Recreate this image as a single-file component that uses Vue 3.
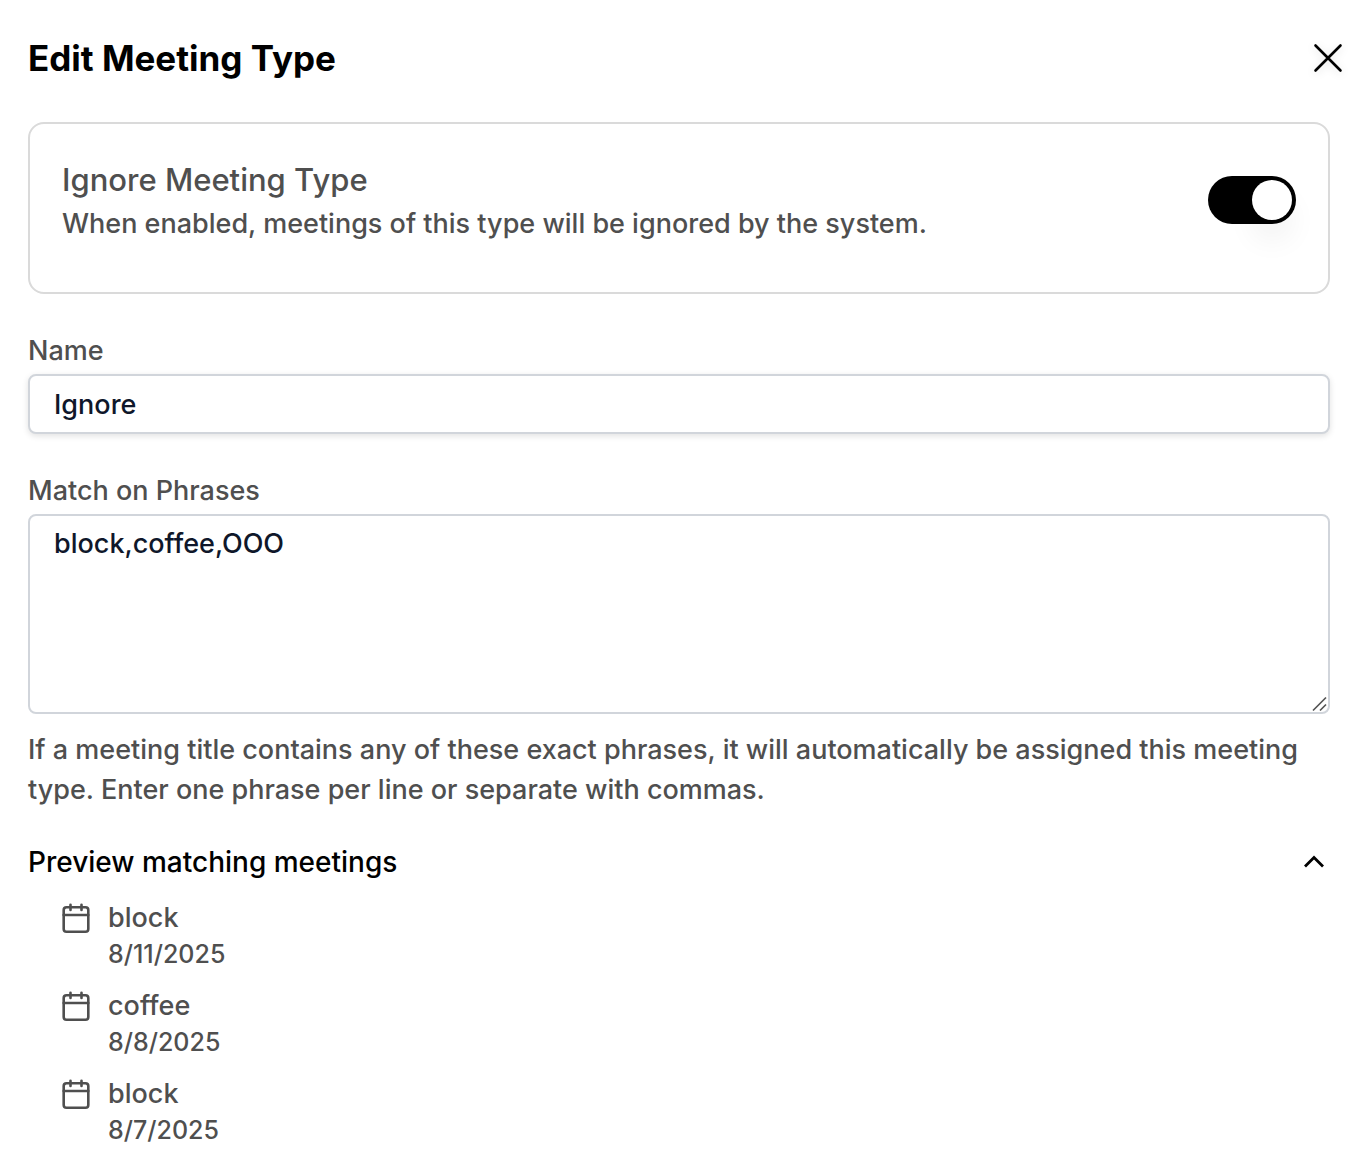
<script setup>
import { ref } from 'vue'

const ignored = ref(true)
const name = ref('Ignore')
const phrases = ref('block,coffee,OOO')
const previewOpen = ref(true)

const meetings = [
  { title: 'block', date: '8/11/2025' },
  { title: 'coffee', date: '8/8/2025' },
  { title: 'block', date: '8/7/2025' },
]
</script>

<template>
  <main class="dialog" role="dialog" aria-labelledby="dialog-title">
    <header class="header">
      <h1 id="dialog-title">Edit Meeting Type</h1>
      <button class="close" type="button" aria-label="Close">
        <svg width="32" height="32" viewBox="0 0 32 32" fill="none" stroke="currentColor" stroke-width="2.6" stroke-linecap="round">
          <path d="M3.5 3.5 28.5 28.5M28.5 3.5 3.5 28.5" />
        </svg>
      </button>
    </header>

    <section class="card">
      <div class="card-text">
        <label class="card-title" for="ignore">Ignore Meeting Type</label>
        <p id="ignore-hint">When enabled, meetings of this type will be ignored by the system.</p>
      </div>
      <input id="ignore" v-model="ignored" class="switch" type="checkbox" role="switch" aria-describedby="ignore-hint" />
    </section>

    <div class="field">
      <label for="name">Name</label>
      <input id="name" v-model="name" class="control text-input" type="text" />
    </div>

    <div class="field">
      <label for="phrases">Match on Phrases</label>
      <div class="area">
        <textarea id="phrases" v-model="phrases" class="control" aria-describedby="phrases-hint"></textarea>
        <svg class="grip" width="16" height="16" viewBox="0 0 16 16" fill="none" stroke="#555" stroke-width="1.7">
          <path d="M1 14.5 14 1.5M8 14.5 14 8.5" />
        </svg>
      </div>
      <p id="phrases-hint" class="hint">
        If a meeting title contains any of these exact phrases, it will automatically be assigned this meeting type. Enter one phrase per line or separate with commas.
      </p>
    </div>

    <section class="preview">
      <button class="preview-toggle" type="button" :aria-expanded="previewOpen" @click="previewOpen = !previewOpen">
        <span>Preview matching meetings</span>
        <svg :class="{ closed: !previewOpen }" width="32" height="32" viewBox="0 0 32 32" fill="none" stroke="currentColor" stroke-width="2.8">
          <path d="M7 20.5 16 11.5 25 20.5" />
        </svg>
      </button>
      <ul v-if="previewOpen">
        <li v-for="meeting in meetings" :key="meeting.date">
          <svg width="28" height="32" viewBox="0 0 28 32" fill="none" stroke="currentColor" stroke-width="2.6" stroke-linecap="round">
            <rect x="1.7" y="5.3" width="24.6" height="24.4" rx="2.8" />
            <path d="M1.7 13H26.3M8.5 2.8V8M19.5 2.8V8" />
          </svg>
          <div>
            <p class="meeting-title">{{ meeting.title }}</p>
            <p class="meeting-date">{{ meeting.date }}</p>
          </div>
        </li>
      </ul>
    </section>
  </main>
</template>

<style>
body {
  background: #fff;
}
</style>

<style scoped>
* {
  box-sizing: border-box;
}

.dialog {
  padding: 34px 32px 16px 28px;
  font: 500 27px/40px Inter, "Liberation Sans", sans-serif;
  color: #4f4f4f;
}

h1,
p,
ul {
  margin: 0;
}

button {
  padding: 0;
  border: 0;
  background: none;
  font: inherit;
  color: #000;
  cursor: pointer;
}

svg {
  display: block;
  flex: none;
}

.header {
  display: flex;
  align-items: center;
  justify-content: space-between;
  margin-right: -14px;
}

h1 {
  font-size: 35px;
  line-height: 48px;
  font-weight: 700;
  color: #000;
}

.close {
  filter: drop-shadow(0 2px 4px rgb(0 0 0 / 12%));
}

.card {
  display: flex;
  align-items: center;
  justify-content: space-between;
  gap: 32px;
  margin-top: 40px;
  padding: 32px 32px 48px;
  border: 2px solid #dadada;
  border-radius: 16px;
}

.card-title {
  display: block;
  font-size: 31px;
  line-height: 48px;
}

.switch {
  appearance: none;
  flex: none;
  width: 88px;
  height: 48px;
  margin: 0;
  padding: 4px;
  border-radius: 24px;
  background: #cbd0d8;
  cursor: pointer;
}

.switch::before {
  content: "";
  display: block;
  width: 40px;
  height: 40px;
  border-radius: 50%;
  background: #fff;
  box-shadow: 0 20px 30px rgb(0 0 0 / 6%);
}

.switch:checked {
  background: #000;
}

.switch:checked::before {
  margin-left: 40px;
}

.field {
  margin-top: 37px;
}

.field label {
  display: block;
  margin-bottom: 3px;
}

.control {
  display: block;
  width: 100%;
  margin: 0;
  padding: 8px 24px;
  border: 2px solid #d1d5db;
  border-radius: 8px;
  background: #fff;
  font: inherit;
  color: #0f172a;
  outline: none;
}

.text-input {
  height: 60px;
  box-shadow: 0 2px 6px rgb(0 0 0 / 12%);
}

.area {
  position: relative;
}

textarea {
  height: 200px;
  resize: vertical;
}

textarea::-webkit-resizer {
  display: none;
}

.grip {
  position: absolute;
  right: 2px;
  bottom: 2px;
  pointer-events: none;
}

.hint {
  margin-top: 16px;
}

.preview {
  margin-top: 32px;
}

.preview-toggle {
  display: flex;
  align-items: center;
  justify-content: space-between;
  width: 100%;
  font-size: 28px;
  text-align: left;
}

.closed {
  transform: rotate(180deg);
}

ul {
  display: grid;
  gap: 16px;
  margin-top: 16px;
  padding: 0 34px;
  list-style: none;
}

li {
  display: flex;
  gap: 18px;
}

li svg {
  margin-top: 4px;
}

.meeting-date {
  font-size: 25px;
  line-height: 32px;
}
</style>
